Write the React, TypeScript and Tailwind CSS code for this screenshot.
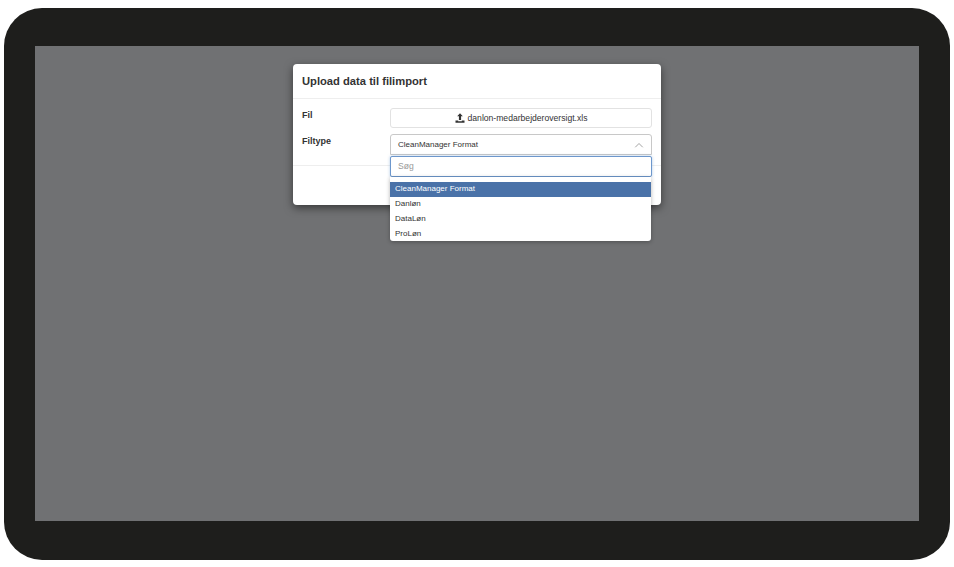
const options = ["CleanManager Format", "Danløn", "DataLøn", "ProLøn"];

const UploadIcon = () => (
  <svg viewBox="0 0 12 12" className="h-[10px] w-[10px] fill-[#333]">
    <path d="M6 .4 9.4 4H7.3v4.4H4.7V4H2.6zM.6 9h3.2v1h4.4V9h3.2v2.6H.6z" />
  </svg>
);

export default function App() {
  return (
    <div className="h-[567px] w-[954px] overflow-hidden bg-white pb-[7px] pl-1 pr-1 pt-2 font-['Liberation_Sans',sans-serif]">
      <div className="h-[552px] w-[946px] rounded-[38px] bg-[#1e1e1c] pb-[39px] pl-[31px] pr-[31px] pt-[38px]">
        <div className="relative h-[475px] w-[884px] bg-[#707173]">
          <div className="absolute left-[258px] top-[18px] h-[141px] w-[368px] rounded-[4px] bg-white shadow-[0_3px_9px_rgba(0,0,0,0.5)]">
            <div className="flex h-[35px] items-center border-b border-[#eeeeee] pl-[9px] text-[11.2px] font-bold text-[#333]">
              Upload data til filimport
            </div>
            <div className="h-[67px] border-b border-[#eeeeee] pl-[9px] pr-[9px] pt-[9px] text-[9px] text-[#333]">
              <div className="flex">
                <div className="w-[88px] pt-[1px] font-bold">Fil</div>
                <div className="flex h-[20px] w-[262px] items-center justify-center gap-[3px] rounded-[3px] border border-[#e2e2e2] text-[8.6px]">
                  <UploadIcon />
                  danlon-medarbejderoversigt.xls
                </div>
              </div>
              <div className="mt-[6px] flex">
                <div className="w-[88px] pt-[1px] font-bold">Filtype</div>
                <div className="flex h-[21px] w-[262px] items-center justify-between rounded-t-[3px] border border-[#c8c8c8] pl-[7px] pr-[7px] pt-[1px] text-[8px]">
                  CleanManager Format
                  <svg viewBox="0 0 12 8" className="h-[6px] w-[10px] fill-none stroke-[#999] stroke-[1.2]">
                    <path d="M1 7 6 2l5 5" />
                  </svg>
                </div>
              </div>
            </div>
          </div>
          <div className="absolute left-[355px] top-[110px] w-[262px] text-[8px] text-[#333]">
            <div className="flex h-[21px] items-center rounded-[2px] border border-[#6d97cc] bg-white pl-[7px] text-[8.6px] text-[#999] shadow-[0_0_3px_rgba(92,143,201,0.5)]">
              Søg
            </div>
            <ul className="w-[261px] rounded-b-[3px] bg-white pt-[5px] shadow-[0_1px_4px_rgba(0,0,0,0.3)]">
              {options.map((option, index) => (
                <li
                  key={option}
                  className={`flex h-[14.75px] items-center pl-[5px] ${index === 0 ? "bg-[#4a72a8] text-white" : ""}`}
                >
                  {option}
                </li>
              ))}
            </ul>
          </div>
        </div>
      </div>
    </div>
  );
}
